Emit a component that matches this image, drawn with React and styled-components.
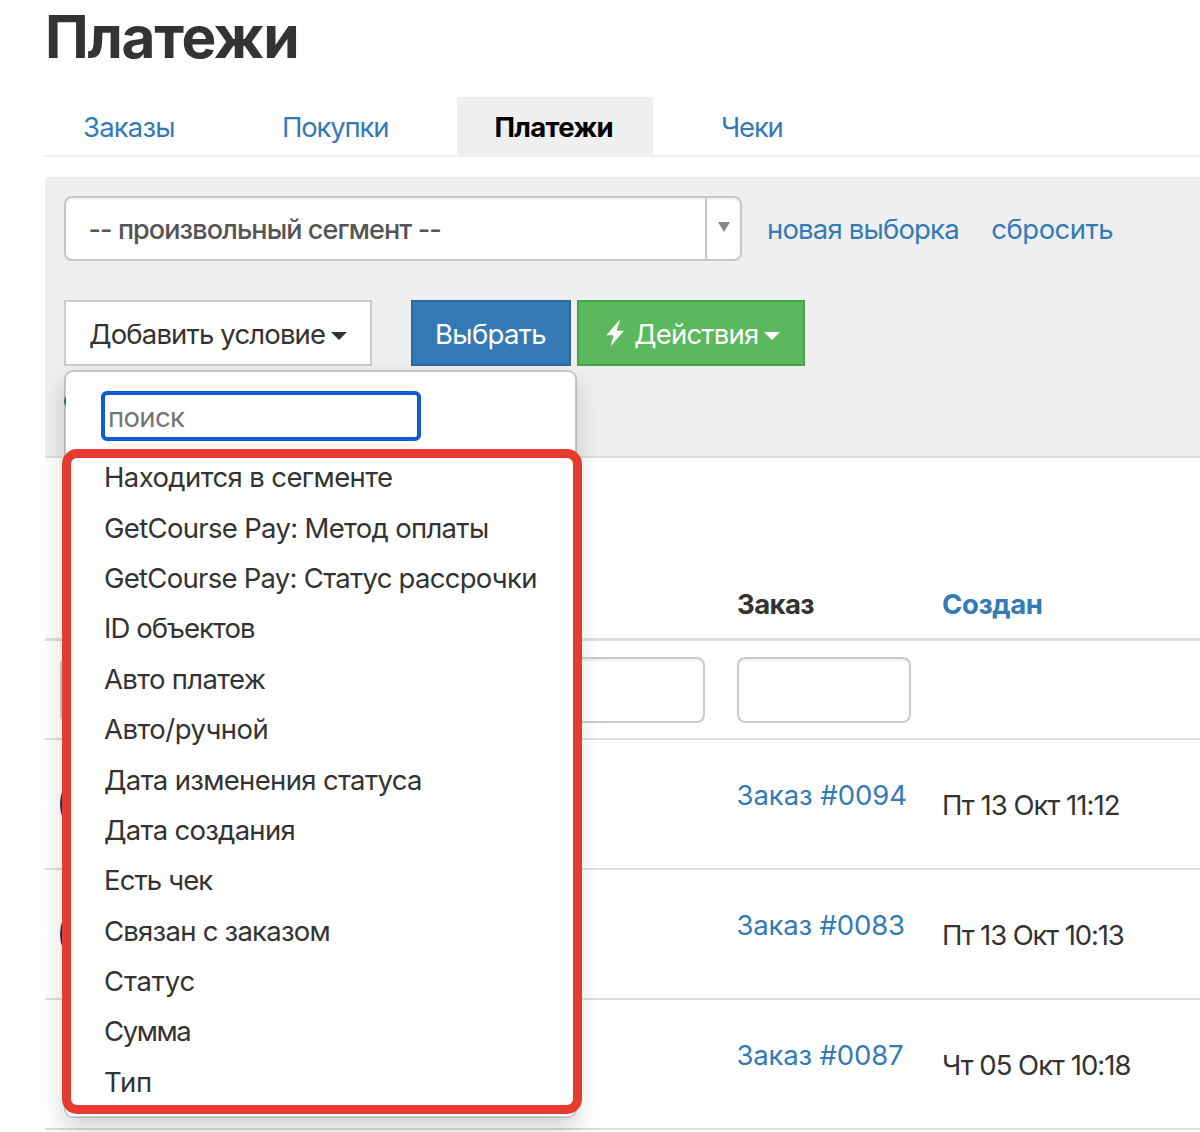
import React from "react";
import styled, { createGlobalStyle, ThemeProvider } from "styled-components";

const theme = {
  text: "#333",
  link: "#337ab7",
  panel: "#efefef",
  border: "#c6c6c6",
  line: "#ddd",
  green: "#5cb85c",
  red: "#e53b30",
  focus: "#0b5cd5",
};

const GlobalStyle = createGlobalStyle`
  * {
    box-sizing: border-box;
  }

  body {
    margin: 0;
    background: #fff;
    overflow: hidden;
    font-family: Inter, "Liberation Sans", sans-serif;
    font-size: 27.5px;
  }
`;

//page
const Page = styled.main`
  height: 1132px;
  padding-left: 45px;
  overflow: hidden;
  color: ${(props) => props.theme.text};
`;

const Title = styled.h1`
  margin: 0;
  height: 97px;
  font-size: 58.5px;
  line-height: 74px;
  font-weight: 700;
  letter-spacing: -1.25px;
`;

const Label = styled.span`
  letter-spacing: ${(props) => props.$track || 0}px;
  white-space: nowrap;
`;

//tabs
const Tabs = styled.nav`
  display: flex;
  gap: 30px;
  height: 60px;
  border-bottom: 2px solid ${(props) => props.theme.panel};
`;

const Tab = styled.a`
  width: ${(props) => props.$width}px;
  padding-left: 38px;
  line-height: 60px;
  color: ${(props) => (props.$active ? "#000" : props.theme.link)};
  font-weight: ${(props) => (props.$active ? 700 : 400)};
  background: ${(props) => (props.$active ? props.theme.panel : "none")};
`;

//filter panel
const Panel = styled.section`
  height: 281px;
  margin-top: 20px;
  padding: 19px 0 0 19px;
  background: ${(props) => props.theme.panel};
  border-bottom: 2px solid ${(props) => props.theme.line};
`;

const SegmentRow = styled.div`
  display: flex;
  align-items: center;
  height: 65px;
`;

const Select = styled.div`
  display: flex;
  width: 678px;
  height: 65px;
  border: 2px solid ${(props) => props.theme.border};
  border-radius: 8px;
  background: #fff;
  box-shadow: inset 0 2px 2px rgba(0, 0, 0, 0.06);
`;

const SelectValue = styled.div`
  flex: 1;
  padding-left: 22.5px;
  line-height: 63px;
  font-size: 27px;
  font-weight: 500;
  color: #555;
`;

const SelectArrow = styled.div`
  display: flex;
  justify-content: center;
  width: 35px;
  padding-top: 24px;
  border-left: 2px solid ${(props) => props.theme.border};

  &::after {
    content: "";
    width: 0;
    height: 0;
    border: 6px solid transparent;
    border-top: 10px solid #888;
    border-bottom: 0;
  }
`;

const PanelLink = styled.a`
  margin-left: ${(props) => props.$gap}px;
  color: ${(props) => props.theme.link};
  line-height: 66px;
`;

const Buttons = styled.div`
  display: flex;
  margin-top: 39px;
`;

const Button = styled.div`
  display: flex;
  align-items: center;
  width: ${(props) => props.$width}px;
  height: 66px;
  padding-top: 2px;
  padding-left: ${(props) => props.$pad || 23}px;
  margin-right: ${(props) => props.$gap || 0}px;
  color: ${(props) => props.$color || "#fff"};
  background: ${(props) => props.$bg};
  border: 2px solid ${(props) => props.$edge};
`;

const Caret = styled.i`
  margin: 3px 0 0 ${(props) => props.$gap}px;
  border: 8px solid transparent;
  border-top: 8px solid;
  border-bottom: 0;
`;

const Flash = styled.svg`
  width: 18px;
  height: 28px;
  margin: -3px 10px 0 0;
  fill: #fff;
`;

const SavedMark = styled.div`
  width: 14px;
  height: 14px;
  margin-top: 28px;
  border-radius: 50%;
  background: ${(props) => props.theme.link};
`;

//dropdown over the table
const DropdownAnchor = styled.div`
  position: relative;
`;

const Menu = styled.div`
  position: absolute;
  z-index: 2;
  top: 70px;
  left: 0;
  width: 513px;
  height: 748px;
  padding: 19px 0 0 35px;
  background: #fff;
  background-clip: padding-box;
  border: 2px solid rgba(0, 0, 0, 0.17);
  border-radius: 9px;
  box-shadow: 0 12px 24px rgba(0, 0, 0, 0.175);
`;

const Search = styled.div`
  width: 320px;
  height: 50px;
  padding-left: 3px;
  border: 4px solid ${(props) => props.theme.focus};
  border-radius: 6px;
  line-height: 44px;
  color: #757575;
`;

const MenuList = styled.ul`
  list-style: none;
  margin: 11.4px 0 0;
  padding: 0 0 0 3px;
`;

const MenuItem = styled.li`
  height: 50.37px;
  line-height: 50.37px;
`;

const Highlight = styled.div`
  position: absolute;
  top: 77px;
  left: -4px;
  width: 520px;
  height: 665px;
  border: 9px solid ${(props) => props.theme.red};
  border-radius: 15px;
`;

//table
const HeaderRow = styled.div`
  display: grid;
  grid-template-columns: 676px 205px 1fr;
  height: 183px;
  padding-top: 126px;
  padding-left: 16px;
  border-bottom: 3px solid ${(props) => props.theme.line};
  font-weight: 700;
  line-height: 40px;
`;

const HeaderLink = styled.a`
  color: ${(props) => props.theme.link};
`;

const FilterRow = styled.div`
  display: flex;
  gap: 32px;
  height: 99px;
  padding: 16px 0 0 15px;
  border-bottom: 2px solid ${(props) => props.theme.line};
`;

const FilterInput = styled.div`
  width: ${(props) => props.$width}px;
  height: 66px;
  border: 2px solid #ccc;
  border-radius: 8px;
  box-shadow: inset 0 2px 2px rgba(0, 0, 0, 0.06);
`;

const Row = styled.div`
  display: grid;
  grid-template-columns: 676.5px 205px 1fr;
  align-items: center;
  height: 130px;
  padding-left: 15px;
  border-bottom: 2px solid ${(props) => props.theme.line};
`;

const Avatar = styled.div`
  width: 80px;
  height: 80px;
  border-radius: 50%;
  background: ${(props) => (props.$shown ? "#12394f" : "none")};
`;

const OrderLink = styled.a`
  padding-bottom: 18px;
  color: ${(props) => props.theme.link};
`;

const Created = styled.div`
  padding: 2px 0 0 0.5px;
`;

const tabs = [
  { name: "Заказы", width: 169, track: -0.84 },
  { name: "Покупки", width: 182.5, track: -1.2 },
  { name: "Платежи", width: 196.5, track: -0.68, active: true },
  { name: "Чеки", width: 140, track: -1.2 },
];

const conditions = [
  ["Находится в сегменте", -0.61],
  ["GetCourse Pay: Метод оплаты", -0.68],
  ["GetCourse Pay: Статус рассрочки", -0.73],
  ["ID объектов", -0.92],
  ["Авто платеж", -0.65],
  ["Авто/ручной", -0.5],
  ["Дата изменения статуса", -0.66],
  ["Дата создания", -0.71],
  ["Есть чек", -0.88],
  ["Связан с заказом", -0.75],
  ["Статус", -0.2],
  ["Сумма", -1.4],
  ["Тип", -0.25],
];

const payments = [
  { order: "Заказ #0094", orderTrack: -0.05, date: "Пт 13 Окт 11:12", dateTrack: -0.97, avatar: true },
  { order: "Заказ #0083", orderTrack: -0.17, date: "Пт 13 Окт 10:13", dateTrack: -1.11, avatar: true },
  { order: "Заказ #0087", orderTrack: -0.17, date: "Чт 05 Окт 10:18", dateTrack: -0.98 },
];

function ConditionMenu() {
  return (
    <Menu>
      <Search>
        <Label $track={-0.65}>поиск</Label>
      </Search>
      <MenuList>
        {conditions.map(([name, track]) => (
          <MenuItem key={name}>
            <Label $track={track}>{name}</Label>
          </MenuItem>
        ))}
      </MenuList>
      <Highlight />
    </Menu>
  );
}

function FilterPanel() {
  return (
    <Panel>
      <SegmentRow>
        <Select>
          <SelectValue>
            <Label $track={-0.92}>-- произвольный сегмент --</Label>
          </SelectValue>
          <SelectArrow />
        </Select>
        <PanelLink $gap={25}>
          <Label $track={-0.82}>новая выборка</Label>
        </PanelLink>
        <PanelLink $gap={32.5}>
          <Label $track={-0.5}>сбросить</Label>
        </PanelLink>
      </SegmentRow>
      <Buttons>
        <DropdownAnchor>
          <Button $width={308} $gap={39} $color="#333" $bg="#fff" $edge="#ccc">
            <Label $track={-0.84}>Добавить условие</Label>
            <Caret $gap={6} />
          </Button>
          <ConditionMenu />
        </DropdownAnchor>
        <Button $width={160} $gap={6} $pad={22} $bg="#337ab7" $edge="#2b699f">
          <Label $track={-0.67}>Выбрать</Label>
        </Button>
        <Button $width={228} $pad={27} $bg={theme.green} $edge="#44a644">
          <Flash viewBox="0 0 18 28">
            <path d="M14 0.5 0.3 16.3H7.6L4.6 27.2 18 11.8H10.8Z" />
          </Flash>
          <Label $track={-0.8}>Действия</Label>
          <Caret $gap={6} />
        </Button>
      </Buttons>
      <SavedMark />
    </Panel>
  );
}

function PaymentsTable() {
  return (
    <section>
      <HeaderRow>
        <span />
        <Label $track={-0.6}>Заказ</Label>
        <HeaderLink>
          <Label $track={-0.4}>Создан</Label>
        </HeaderLink>
      </HeaderRow>
      <FilterRow>
        <FilterInput $width={645} />
        <FilterInput $width={174} />
      </FilterRow>
      {payments.map((payment) => (
        <Row key={payment.order}>
          <Avatar $shown={payment.avatar} />
          <OrderLink>
            <Label $track={payment.orderTrack}>{payment.order}</Label>
          </OrderLink>
          <Created>
            <Label $track={payment.dateTrack}>{payment.date}</Label>
          </Created>
        </Row>
      ))}
    </section>
  );
}

export default function App() {
  return (
    <ThemeProvider theme={theme}>
      <GlobalStyle />
      <Page>
        <Title>Платежи</Title>
        <Tabs>
          {tabs.map((tab) => (
            <Tab key={tab.name} $width={tab.width} $active={tab.active}>
              <Label $track={tab.track}>{tab.name}</Label>
            </Tab>
          ))}
        </Tabs>
        <FilterPanel />
        <PaymentsTable />
      </Page>
    </ThemeProvider>
  );
}
